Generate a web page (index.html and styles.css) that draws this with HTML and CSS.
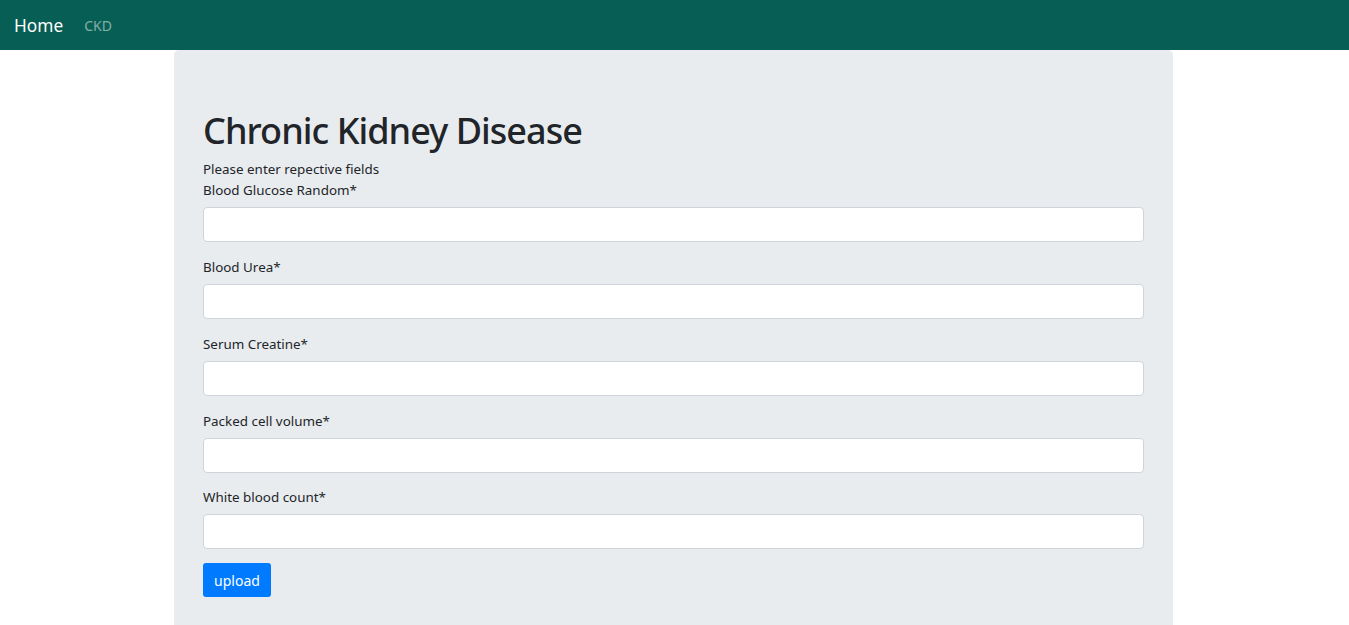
FILE: index.html
```html
<!DOCTYPE html>
<html>
<head>
<meta charset="utf-8">
<link rel="stylesheet" href="styles.css">
</head>
<body>
<nav class="navbar">
  <a class="brand" href="#">Home</a>
  <a class="nav-link" href="#">CKD</a>
</nav>
<main class="jumbotron">
  <h1 class="title">Chronic Kidney Disease</h1>
  <p class="lead">Please enter repective fields</p>
  <form class="form">
    <div class="group">
      <label class="label">Blood Glucose Random*</label>
      <input class="input" type="text">
    </div>
    <div class="group">
      <label class="label">Blood Urea*</label>
      <input class="input" type="text">
    </div>
    <div class="group">
      <label class="label">Serum Creatine*</label>
      <input class="input" type="text">
    </div>
    <div class="group group-tight">
      <label class="label">Packed cell volume*</label>
      <input class="input" type="text">
    </div>
    <div class="group group-tight">
      <label class="label">White blood count*</label>
      <input class="input" type="text">
    </div>
    <button class="btn" type="button">upload</button>
  </form>
</main>
</body>
</html>
```
FILE: styles.css
```css
* { box-sizing: border-box; }
html, body { margin: 0; padding: 0; }
body {
  font-family: "Noto Sans", "Open Sans", sans-serif;
  color: #212529;
  background: #fff;
  font-size: 14px;
}
.navbar {
  height: 50px;
  background: #075e54;
  display: flex;
  align-items: center;
  padding: 0 14px;
}
.brand {
  color: #fff;
  text-decoration: none;
  font-size: 17.3px;
  margin-right: 21px;
}
.nav-link {
  color: rgba(255,255,255,0.5);
  text-decoration: none;
  font-size: 14px;
}
.jumbotron {
  width: 999px;
  margin: 0 0 0 174px;
  background: #e9ecef;
  border-radius: 5px 5px 0 0;
  padding: 57px 29px 28px;
  min-height: 575px;
}
.title {
  margin: 0 0 4px;
  font-size: 36px;
  letter-spacing: -0.95px;
  font-weight: 500;
  line-height: 48px;
}
.lead {
  margin: 0;
  line-height: 21px;
  font-size: 13.4px;
}
.group {
  margin-bottom: 15px;
}
.group-tight {
  margin-bottom: 14px;
}
.label {
  display: block;
  line-height: 21px;
  font-size: 13.4px;
  margin-bottom: 6px;
}
.input {
  display: block;
  width: 100%;
  height: 35px;
  border: 1px solid #ced4da;
  border-radius: 4px;
  background: #fff;
  font-family: inherit;
  font-size: 14px;
  padding: 6px 12px;
}
.btn {
  display: block;
  width: 68px;
  height: 34px;
  background: #007bff;
  color: #fff;
  border: 0;
  border-radius: 3px;
  font-family: inherit;
  font-size: 14px;
  padding: 0;
}
```
